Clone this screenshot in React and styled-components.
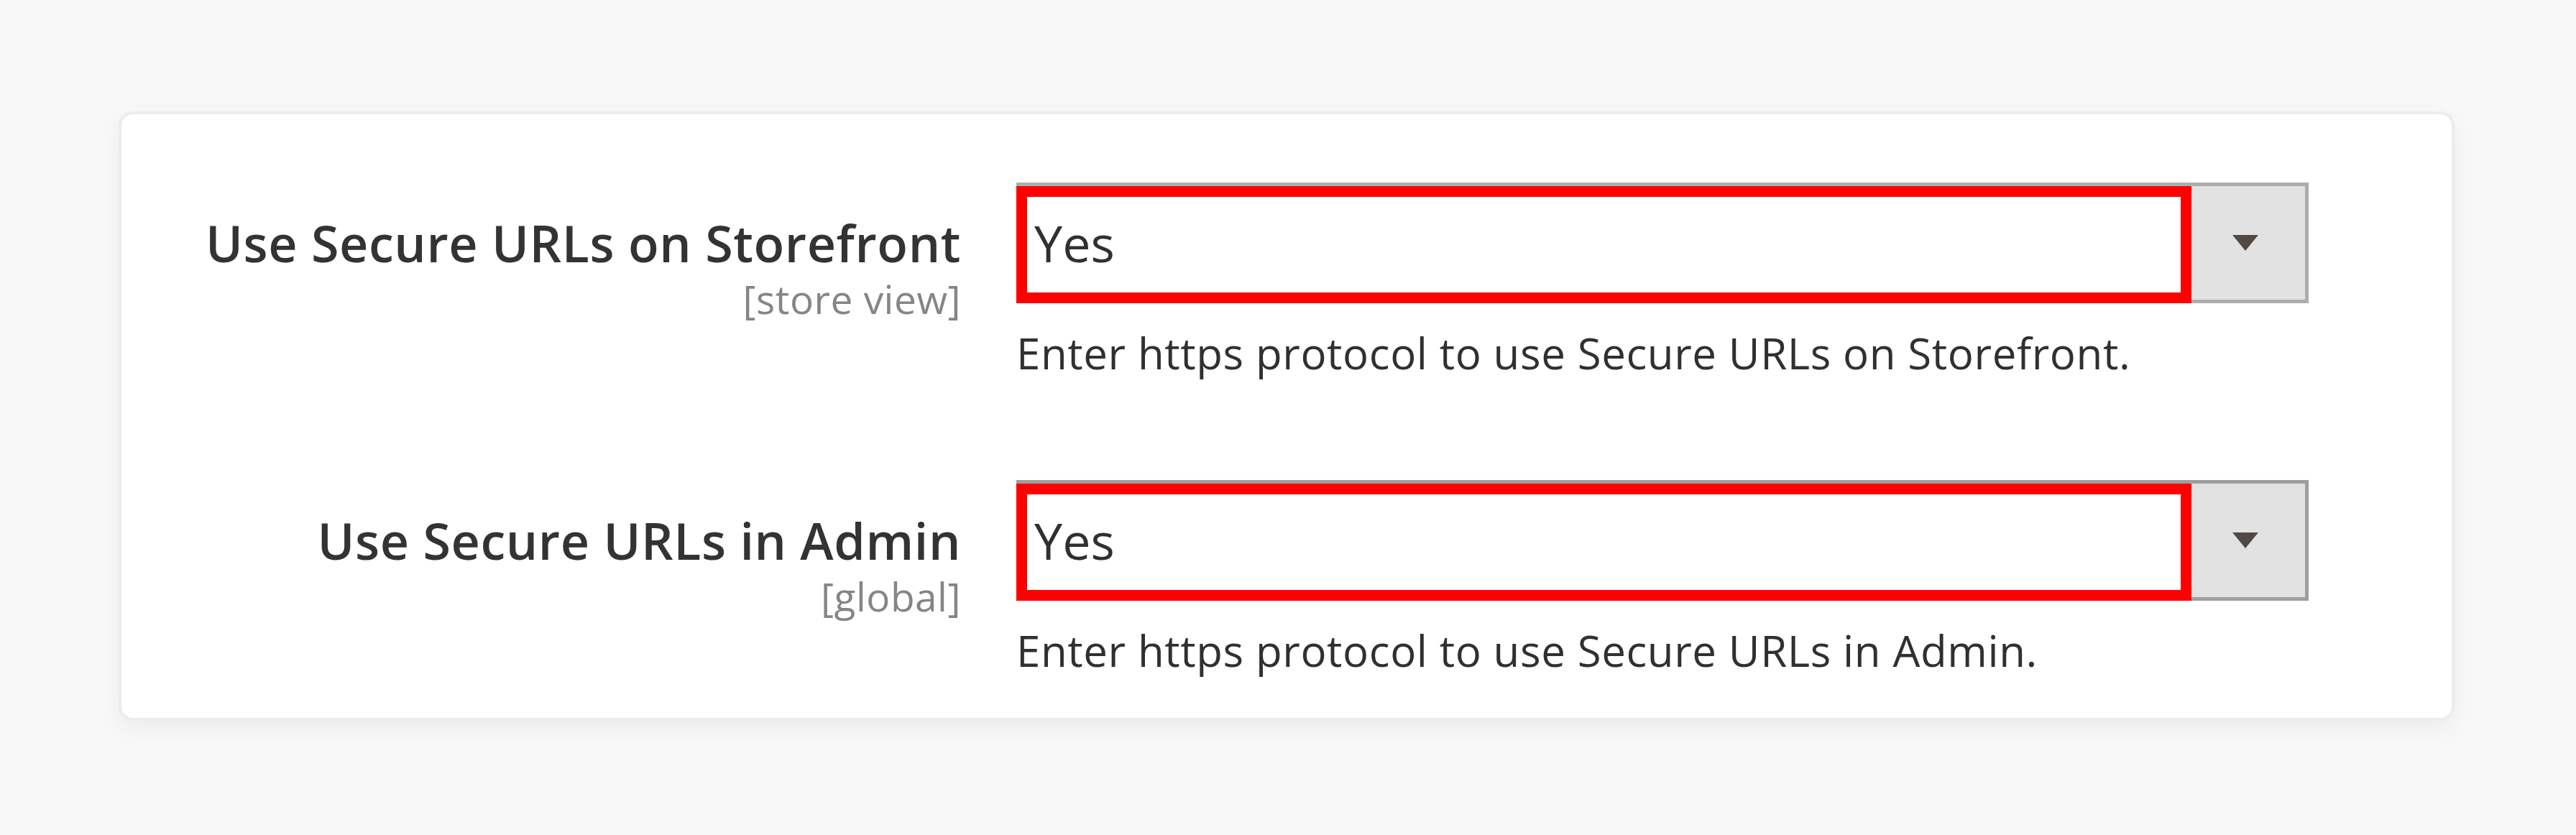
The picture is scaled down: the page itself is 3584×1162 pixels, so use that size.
import React from 'react';
import styled, { createGlobalStyle } from 'styled-components';

const GlobalStyle = createGlobalStyle`
  html, body {
    margin: 0;
    padding: 0;
    background: #f8f8f8;
  }
  body {
    font-family: "Open Sans", "Noto Sans", sans-serif;
    color: #303030;
  }
`;

const fields = [
  {
    label: 'Use Secure URLs on Storefront',
    scope: '[store view]',
    value: 'Yes',
    note: 'Enter https protocol to use Secure URLs on Storefront.',
    border: '#adadad',
  },
  {
    label: 'Use Secure URLs in Admin',
    scope: '[global]',
    value: 'Yes',
    note: 'Enter https protocol to use Secure URLs in Admin.',
    border: '#9e9e9e',
  },
];

const App = () => {
  return (
    <>
      <GlobalStyle />
      <Page>
        <Card>
          {fields.map((f) => (
            <FieldRow key={f.label}>
              <LabelCol>
                <Label>{f.label}</Label>
                <Scope>{f.scope}</Scope>
              </LabelCol>
              <Control>
                <Select $border={f.border}>
                  <Value>
                    {f.value}
                    <Highlight />
                  </Value>
                  <ArrowBox>
                    <svg width="38" height="24" viewBox="0 0 38 24">
                      <polygon points="1,1 37,1 19,23" fill="#514943" />
                    </svg>
                  </ArrowBox>
                </Select>
                <Note>{f.note}</Note>
              </Control>
            </FieldRow>
          ))}
        </Card>
      </Page>
    </>
  );
};

const Page = styled.div`
  width: 3584px;
  height: 1162px;
  box-sizing: border-box;
  padding: 155px 169px 0 165px;
`;

const Card = styled.div`
  background: #ffffff;
  border: 4px solid #ececec;
  border-radius: 20px;
  box-shadow: 0 12px 34px rgba(0, 0, 0, 0.05);
  padding: 95px 0 58px 100px;
  display: flex;
  flex-direction: column;
  gap: 141px;
`;

const FieldRow = styled.div`
  display: grid;
  grid-template-columns: 1068px 1798px;
  column-gap: 77px;
`;

const LabelCol = styled.div`
  text-align: right;
  padding-top: 42px;
`;

const Label = styled.div`
  font-size: 70px;
  line-height: 84px;
  font-weight: 600;
  letter-spacing: 0.6px;
  color: #333333;
  white-space: nowrap;
`;

const Scope = styled.div`
  margin-top: 3px;
  font-size: 55px;
  line-height: 66px;
  letter-spacing: 0.5px;
  color: #858585;
`;

const Control = styled.div`
  display: flex;
  flex-direction: column;
`;

const Select = styled.div`
  display: flex;
  height: 168px;
  box-sizing: border-box;
  border: 5px solid ${(p) => p.$border};
  background: #ffffff;
`;

const Value = styled.div`
  position: relative;
  flex: 1;
  display: flex;
  align-items: center;
  padding-left: 20px;
  font-size: 70px;
  line-height: 84px;
  color: #303030;
`;

const Highlight = styled.div`
  position: absolute;
  left: -5px;
  top: 0;
  right: 0;
  bottom: -5px;
  border: 15px solid #ff0000;
  pointer-events: none;
`;

const ArrowBox = styled.div`
  width: 158px;
  background: #e2e2e2;
  display: flex;
  align-items: center;
  justify-content: center;
  padding-right: 8px;
  box-sizing: border-box;
`;

const Note = styled.div`
  margin-top: 33px;
  font-size: 60px;
  line-height: 72px;
  letter-spacing: 0.6px;
  color: #303030;
`;

export default App;
